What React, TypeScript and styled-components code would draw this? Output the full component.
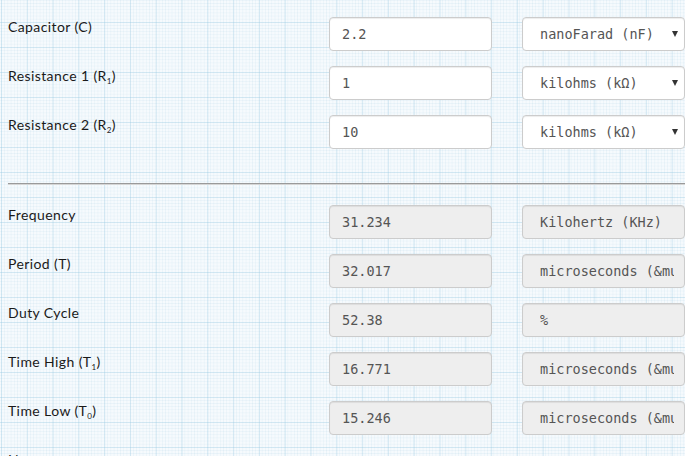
import React from "react";
import styled, { createGlobalStyle } from "styled-components";

const Global = createGlobalStyle`
  html, body { margin: 0; padding: 0; }
  body {
    width: 685px;
    height: 456px;
    overflow: hidden;
    background-color: #f6fafd;
    background-image:
      linear-gradient(to right, rgba(150, 200, 225, 0.32) 1px, transparent 1px),
      linear-gradient(to bottom, rgba(150, 200, 225, 0.32) 1px, transparent 1px),
      linear-gradient(to right, rgba(170, 210, 230, 0.16) 1px, transparent 1px),
      linear-gradient(to bottom, rgba(170, 210, 230, 0.16) 1px, transparent 1px);
    background-size: 25.8px 25px, 25.8px 25px, 3.225px 3.125px, 3.225px 3.125px;
    background-position: 1px 22px, 1px 22px, 1px 0px, 1px 0px;
  }
`;

const Page = styled.div`
  padding: 17px 0 0 8px;
  width: 677px;
`;

const Section = styled.div`
  display: flex;
  flex-direction: column;
  gap: 15px;
`;

const Row = styled.div`
  display: grid;
  grid-template-columns: 291px 163px 163px;
  column-gap: 30px;
  align-items: start;
`;

const Label = styled.label`
  font-family: "Lato", "Noto Sans", sans-serif;
  font-size: 14px;
  line-height: 20px;
  color: #1a1a1a;
  letter-spacing: 0.4px;
  white-space: nowrap;
  sub {
    font-size: 8px;
    vertical-align: -3px;
    line-height: 0;
  }
`;

const Field = styled.input<{ $ro?: boolean; $unit?: boolean }>`
  box-sizing: border-box;
  width: 163px;
  height: 34px;
  padding: 0 10px 0 ${(p) => (p.$unit ? "17px" : "12px")};
  border: 1px solid #ccc;
  border-radius: 4px;
  background: ${(p) => (p.$ro ? "#eeeeee" : "#ffffff")};
  box-shadow: inset 0 1px 1px rgba(0, 0, 0, 0.075);
  font-family: "DejaVu Sans Mono", "Liberation Mono", monospace;
  font-size: 13.5px;
  color: #555;
  outline: none;
`;

const SelectWrap = styled.div`
  position: relative;
  width: 163px;
  height: 34px;
`;

const Select = styled.select`
  box-sizing: border-box;
  width: 163px;
  height: 34px;
  padding: 0 20px 0 17px;
  border: 1px solid #ccc;
  border-radius: 4px;
  background: #fff;
  box-shadow: inset 0 1px 1px rgba(0, 0, 0, 0.075);
  appearance: none;
  -webkit-appearance: none;
  font-family: "DejaVu Sans Mono", "Liberation Mono", monospace;
  font-size: 13.5px;
  color: #555;
  outline: none;
`;

const Arrow = styled.span`
  position: absolute;
  right: 7px;
  top: 14px;
  width: 0;
  height: 0;
  border-left: 3.5px solid transparent;
  border-right: 3.5px solid transparent;
  border-top: 6px solid #333;
  pointer-events: none;
`;

const Divider = styled.hr`
  margin: 34px 0 20px 0;
  border: 0;
  border-top: 1px solid #9a9a9a;
  border-bottom: 1px solid #d6d6d6;
  width: 685px;
`;

const NotesRow = styled.div`
  margin-top: 15px;
`;

type InRow = { label: React.ReactNode; value: string; unit: string };
const inputs: InRow[] = [
  { label: <>Capacitor (C)</>, value: "2.2", unit: "nanoFarad (nF)" },
  { label: <>Resistance 1 (R<sub>1</sub>)</>, value: "1", unit: "kilohms (kΩ)" },
  { label: <>Resistance 2 (R<sub>2</sub>)</>, value: "10", unit: "kilohms (kΩ)" },
];

const outputs: InRow[] = [
  { label: <>Frequency</>, value: "31.234", unit: "Kilohertz (KHz)" },
  { label: <>Period (T)</>, value: "32.017", unit: "microseconds (&mu;s)" },
  { label: <>Duty Cycle</>, value: "52.38", unit: "%" },
  { label: <>Time High (T<sub>1</sub>)</>, value: "16.771", unit: "microseconds (&mu;s)" },
  { label: <>Time Low (T<sub>0</sub>)</>, value: "15.246", unit: "microseconds (&mu;s)" },
];

export default function App() {
  return (
    <>
      <Global />
      <Page>
        <Section>
          {inputs.map((r, i) => (
            <Row key={i}>
              <Label>{r.label}</Label>
              <Field defaultValue={r.value} />
              <SelectWrap>
                <Select defaultValue={r.unit}>
                  <option>{r.unit}</option>
                </Select>
                <Arrow />
              </SelectWrap>
            </Row>
          ))}
        </Section>
        <Divider />
        <Section>
          {outputs.map((r, i) => (
            <Row key={i}>
              <Label>{r.label}</Label>
              <Field $ro readOnly value={r.value} />
              <Field $ro $unit readOnly value={r.unit} />
            </Row>
          ))}
        </Section>
        <NotesRow>
          <Label>Notes</Label>
        </NotesRow>
      </Page>
    </>
  );
}
